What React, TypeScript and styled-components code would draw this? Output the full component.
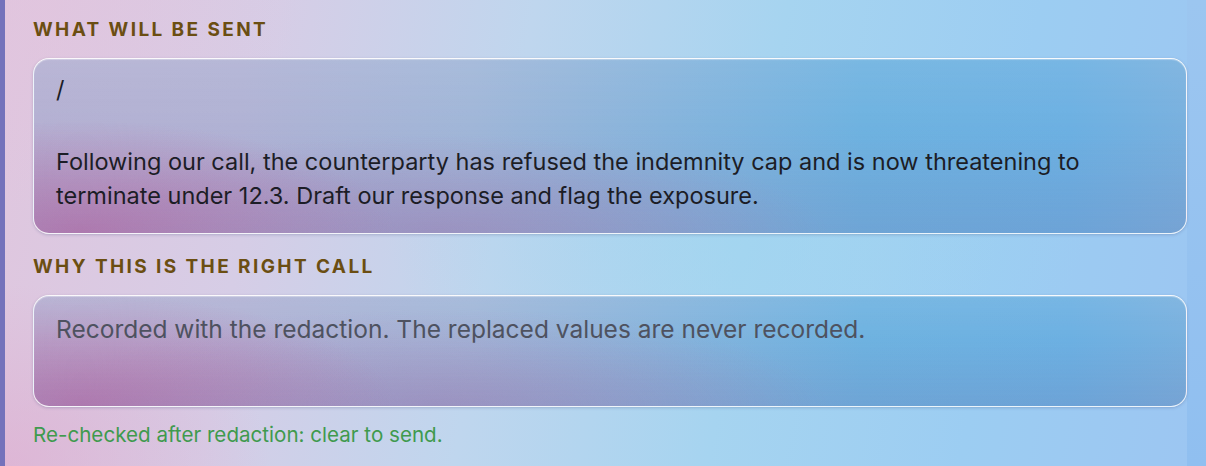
import styled, { createGlobalStyle } from "styled-components";

const GlobalStyle = createGlobalStyle`
  html, body {
    margin: 0;
    padding: 0;
    height: 100%;
  }
  body {
    font-family: Inter, "Noto Sans", "Liberation Sans", sans-serif;
    background: linear-gradient(180deg, #9cc6f0 0%, #90bff0 100%);
    overflow: hidden;
  }
`;

const Page = styled.div`
  display: flex;
  width: 1206px;
  height: 466px;
`;

const Panel = styled.section`
  width: 1187px;
  height: 466px;
  box-sizing: border-box;
  border-left: 5px solid #7472bb;
  padding: 18px 0 0 28px;
  background:
    radial-gradient(ellipse 380px 260px at 0% 100%, rgba(222, 170, 206, 0.6), transparent 70%),
    radial-gradient(ellipse 420px 300px at 0% 0%, rgba(226, 196, 222, 0.6), transparent 70%),
    radial-gradient(ellipse 500px 260px at 62% 50%, rgba(160, 214, 240, 0.55), transparent 70%),
    linear-gradient(100deg, #e0c6de 0%, #d6cde6 22%, #bfd6ee 42%, #a6d4f0 62%, #9ccdf2 82%, #9cc6f2 100%);
`;

const Section = styled.div`
  display: flex;
  flex-direction: column;
  & + & {
    margin-top: 21px;
  }
`;

const Label = styled.h3`
  margin: 0 0 16px;
  font-size: 19px;
  line-height: 24px;
  font-weight: 700;
  letter-spacing: 2.4px;
  text-transform: uppercase;
  color: #6b4e12;
`;

const Field = styled.div<{ $height: number; $muted?: boolean }>`
  height: ${({ $height }) => $height}px;
  box-sizing: border-box;
  padding: ${({ $muted }) => ($muted ? "16px" : "13.5px")} 22px 0 22px;
  border-radius: 16px;
  border: 1.5px solid rgba(255, 255, 255, 0.85);
  border-top-color: rgba(255, 255, 255, 0.95);
  box-shadow:
    0 1px 3px rgba(60, 70, 120, 0.25),
    inset 0 1px 1px rgba(255, 255, 255, 0.35);
  background:
    linear-gradient(180deg, rgba(255, 255, 255, 0.08) 0%, transparent 40%, rgba(110, 110, 170, 0.2) 100%),
    radial-gradient(ellipse 420px 150px at 4% 100%, rgba(190, 118, 172, 0.9), transparent 75%),
    radial-gradient(ellipse 520px 130px at 35% 100%, rgba(168, 138, 186, 0.6), transparent 75%),
    linear-gradient(90deg, #b4b0d2 0%, #b0b2d4 18%, #a0b6d8 38%, #86b4dc 55%, #6eb2e0 72%, #6cb0e2 90%, #78b0de 100%);
  font-size: ${({ $muted }) => ($muted ? 24.5 : 23.5)}px;
  line-height: 34px;
  color: ${({ $muted }) => ($muted ? "#4e5260" : "#1c1d26")};
`;

const Body = styled.p`
  margin: 38px 0 0;
`;

const Status = styled.div`
  margin-top: 14.5px;
  font-size: 20.6px;
  line-height: 26px;
  color: #3f9a4e;
`;

const Outside = styled.div`
  flex: 1;
`;

export default function App() {
  return (
    <>
      <GlobalStyle />
      <Page>
        <Panel>
          <Section>
            <Label>What will be sent</Label>
            <Field $height={176}>
              <div>/</div>
              <Body>
                Following our call, the counterparty has refused the indemnity cap and is now
                threatening to terminate under 12.3. Draft our response and flag the exposure.
              </Body>
            </Field>
          </Section>
          <Section>
            <Label>Why this is the right call</Label>
            <Field $height={112} $muted>
              Recorded with the redaction. The replaced values are never recorded.
            </Field>
            <Status>Re-checked after redaction: clear to send.</Status>
          </Section>
        </Panel>
        <Outside />
      </Page>
    </>
  );
}
